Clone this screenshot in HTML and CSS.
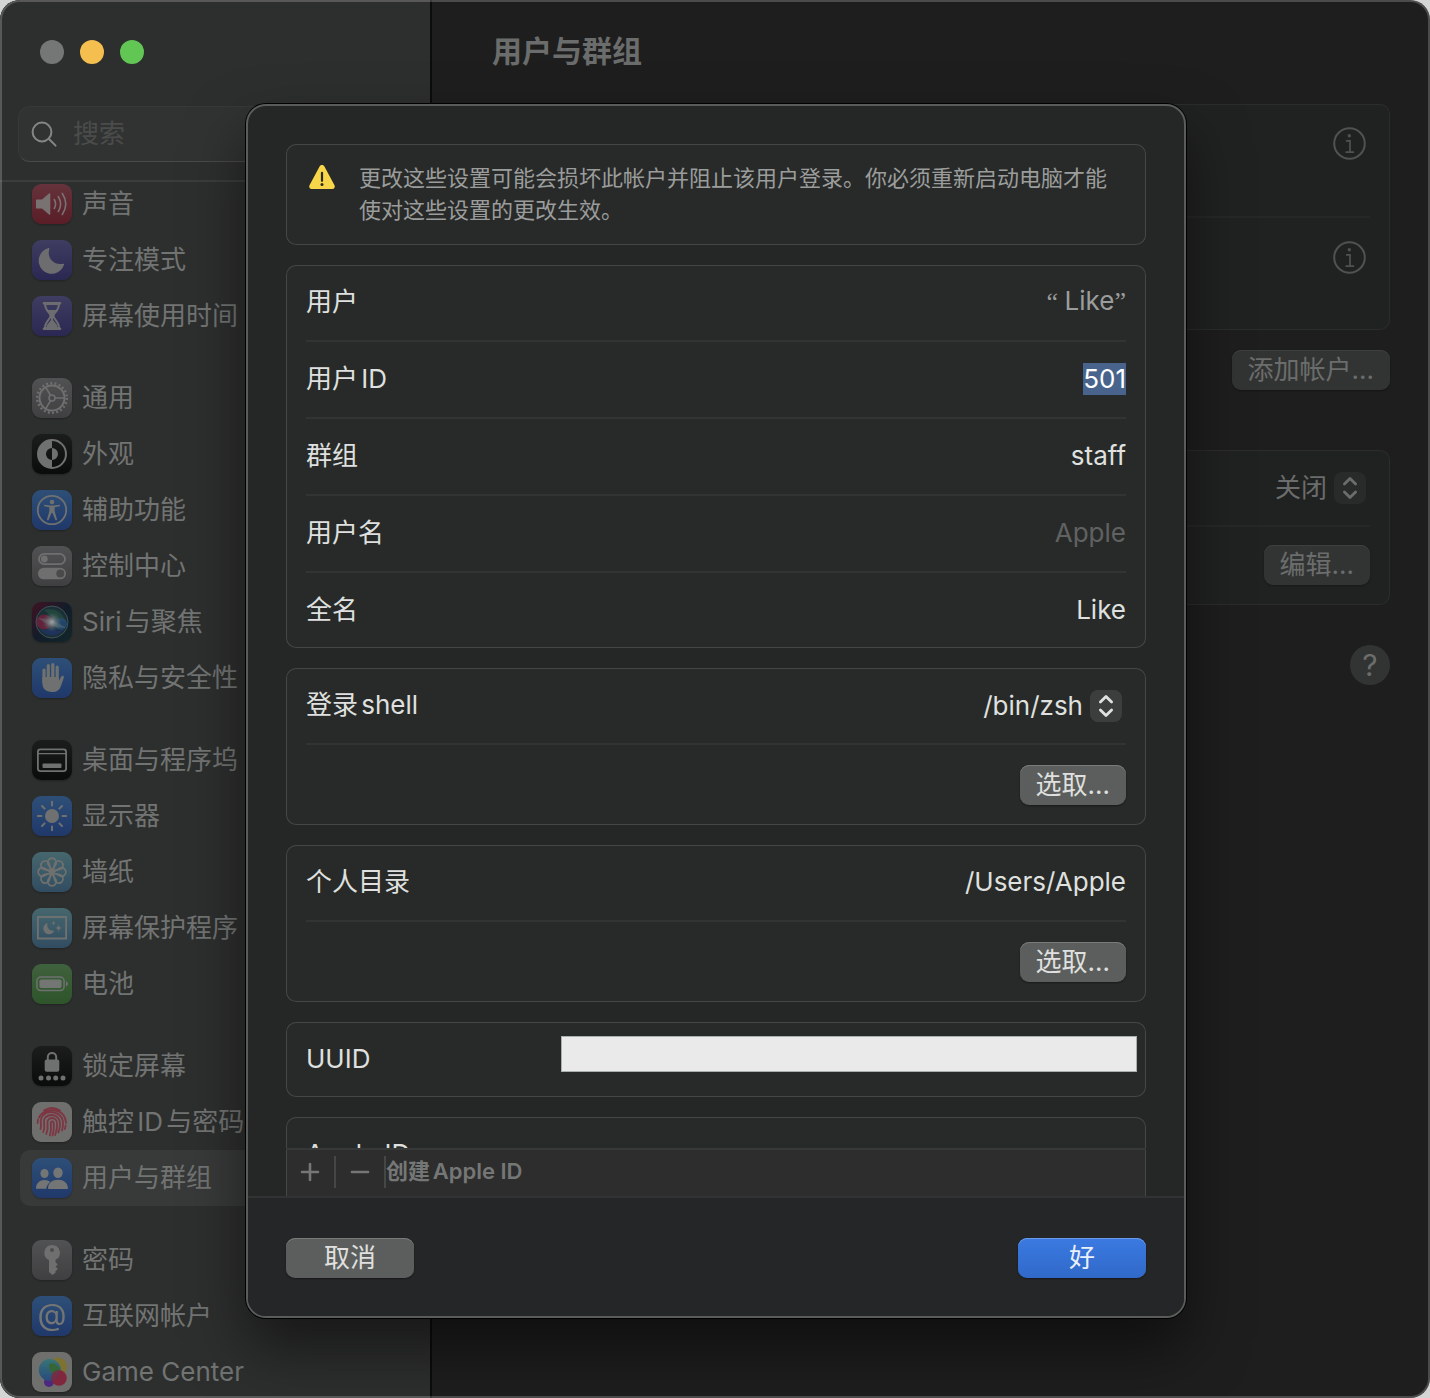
FILE: index.html
```html
<!DOCTYPE html>
<html lang="zh-CN">
<head>
<meta charset="utf-8">
<meta name="viewport" content="width=device-width, initial-scale=1">
<title>用户与群组</title>
<link rel="stylesheet" href="styles.css">
</head>
<body>
<svg class="defs" aria-hidden="true">
  <defs>
    <radialGradient id="siri-glow" cx="50%" cy="50%" r="50%">
      <stop offset="0" stop-color="#b4bcbe"/><stop offset=".35" stop-color="#8c989b" stop-opacity=".75"/><stop offset="1" stop-color="#54686c" stop-opacity="0"/>
    </radialGradient>
    <linearGradient id="siri-bg" x1="0" y1="0" x2="1" y2="1">
      <stop offset="0" stop-color="#4a1428"/><stop offset=".5" stop-color="#15202f"/><stop offset="1" stop-color="#142c30"/>
    </linearGradient>
    <linearGradient id="bubble-blue" x1="0" y1="0" x2="0" y2="1">
      <stop offset="0" stop-color="#3f8484"/><stop offset="1" stop-color="#2d5590"/>
    </linearGradient>
  </defs>
</svg>
<div class="window">
  <aside class="sidebar">
    <div class="sidebar-head">
      <div class="lights">
        <button class="light light-close" aria-label="关闭窗口"></button>
        <button class="light light-min" aria-label="最小化"></button>
        <button class="light light-zoom" aria-label="缩放"></button>
      </div>
      <label class="search">
        <svg width="28" height="28" viewBox="0 0 28 28" fill="none" stroke="#858786" stroke-width="2" stroke-linecap="round"><circle cx="12" cy="12" r="9.4"/><path d="M19 19l6.600 6.600"/></svg>
        <input type="search" placeholder="搜索" aria-label="搜索">
      </label>
    </div>
    <nav class="nav">
      <ul>
        <li><a href="#"><svg class="tile red" viewBox="0 0 40 40"><path fill="#8a8281" d="M5 15.500h5l7-6c.8-.6 1.300-.3 1.300.6v19.800c0 .9-.5 1.200-1.300.6l-7-6H5c-.7 0-1-.3-1-1v-7c0-.7.3-1 1-1z"/><path d="M22.300 15.500q2.600 4.500 0 9M26.300 12.500q4.600 7.500 0 15M30.300 9.500q7 10.500 0 21" fill="none" stroke="#8a8281" stroke-width="1.600" stroke-linecap="round"/></svg>声音</a></li>
        <li><a href="#"><svg class="tile indigo" viewBox="0 0 40 40"><path fill="#7c7c7e" d="M16.600 8.100c.5-.4 1 0 .8.600C14.500 17 21.300 26 31.200 23.700c.7-.2 1.200.3.900.9A13 13 0 1 1 16.600 8.100z"/></svg>专注模式</a></li>
        <li><a href="#"><svg class="tile indigo" viewBox="0 0 40 40"><path d="M12 7.300h16M12 32.700h16" stroke="#7c7c7e" stroke-width="2.600" stroke-linecap="round"/><path d="M13 8c0 7 5.500 8.500 5.500 12S13 25 13 32h14c0-7-5.500-8.500-5.500-12S27 15 27 8z" fill="none" stroke="#7c7c7e" stroke-width="2"/><path d="M15.500 14h9L21 18.500V24l4 5v3H15v-3l4-5v-5.500z" fill="#7c7c7e"/></svg>屏幕使用时间</a></li>
      </ul>
      <ul>
        <li><a href="#"><svg class="tile gray" viewBox="0 0 40 40"><g fill="none" stroke="#7e7e7e"><circle cx="20" cy="20" r="12.500" stroke-width="2"/><circle cx="20" cy="20" r="14.800" stroke-width="2.400" stroke-dasharray="1.900 2.326"/><circle cx="20" cy="20" r="3" stroke-width="1.500"/><path stroke-width="1.600" d="M23 20h9.500M18.500 17.400 13.700 9.200M18.500 22.600l-4.800 8.200"/></g></svg>通用</a></li>
        <li><a href="#"><svg class="tile black" viewBox="0 0 40 40"><circle cx="20" cy="20" r="14" fill="none" stroke="#7e807f" stroke-width="2"/><path d="M20 6a14 14 0 0 0 0 28v-8a6 6 0 0 1 0-12zM20 14a6 6 0 0 1 0 12z" fill="#7e807f"/></svg>外观</a></li>
        <li><a href="#"><svg class="tile blue" viewBox="0 0 40 40"><circle cx="20" cy="20" r="14.200" fill="none" stroke="#7e807f" stroke-width="1.800"/><circle cx="20" cy="12" r="2.300" fill="#7e807f"/><path fill="#7e807f" d="M12.800 14.700l5.200.8h4l5.200-.8c1-.1 1.300 1.300.3 1.500l-4.800 1.100v4.300l2.300 7.600c.2 1-1.300 1.400-1.700.5L20.500 23h-1l-2.800 6.700c-.4.9-1.900.5-1.700-.5l2.300-7.600v-4.300l-4.800-1.100c-1-.2-.7-1.600.3-1.500z"/></svg>辅助功能</a></li>
        <li><a href="#"><svg class="tile gray" viewBox="0 0 40 40"><rect x="7" y="7.800" width="26" height="10.400" rx="5.200" fill="none" stroke="#7e7e7e" stroke-width="1.800"/><circle cx="12.300" cy="13" r="3.400" fill="#7e7e7e"/><rect x="6" y="21.800" width="28" height="11.500" rx="5.700" fill="#7e7e7e"/><circle cx="28.300" cy="27.500" r="4" fill="#545455"/></svg>控制中心</a></li>
        <li><a href="#"><svg class="tile" viewBox="0 0 40 40"><rect width="40" height="40" fill="url(#siri-bg)"/><circle cx="20" cy="20" r="16" fill="#1f363d"/><circle cx="12" cy="20" r="7.500" fill="#7c2443" opacity=".85"/><path d="M12 8q16-4 22 12-10 0-22-12" fill="#285446" opacity=".8"/><circle cx="29" cy="22" r="6" fill="#28578a" opacity=".75"/><path d="M7 27q13 13 26 0-10 4-13-3-4 6-13 3" fill="#223a6c" opacity=".9"/><path d="M6 16q14 0 28 10-16 0-28-10" fill="#7f8e92" opacity=".4"/><circle cx="20" cy="20" r="10" fill="url(#siri-glow)"/><circle cx="20" cy="20" r="16" fill="none" stroke="#4b5c60" stroke-width="1"/></svg>Siri与聚焦</a></li>
        <li><a href="#"><svg class="tile blue" viewBox="0 0 40 40"><path d="M12 12v12M16.300 7.500V22M20.800 6.500V22M25.200 9V22" stroke="#7e807f" stroke-width="3.200" stroke-linecap="round"/><path d="M10.400 19h16.400v4l2.500-4.500c.8-1.400 3-.7 2.600.9l-3 8.600C27.500 32 25 34 20 34c-6.500 0-9.600-3.500-9.600-9z" fill="#7e807f"/></svg>隐私与安全性</a></li>
      </ul>
      <ul>
        <li><a href="#"><svg class="tile black" viewBox="0 0 40 40"><rect x="5.900" y="9.400" width="28.200" height="21.700" rx="2.500" fill="none" stroke="#7e807f" stroke-width="1.800"/><path d="M6 13.600h28" stroke="#7e807f" stroke-width="1.400"/><rect x="10.500" y="23.500" width="19" height="4.500" rx="1" fill="#7e807f"/></svg>桌面与程序坞</a></li>
        <li><a href="#"><svg class="tile blue" viewBox="0 0 40 40"><circle cx="20" cy="20" r="7" fill="#7e807f"/><path d="M20 5.800v3.700M20 30.500v3.700M5.800 20h3.700M30.500 20h3.700M10 10l2.600 2.600M27.400 27.400 30 30M10 30l2.600-2.600M27.400 12.600 30 10" stroke="#7e807f" stroke-width="2" stroke-linecap="round"/></svg>显示器</a></li>
        <li><a href="#"><svg class="tile teal" viewBox="0 0 40 40"><g fill="none" stroke="#7e807f" stroke-width="1.700"><g id="petals"><path id="petal" d="M22 21.500l-6-9.500a4.300 4.300 0 1 1 8 0l-6 9.500"/><use href="#petal" transform="rotate(90 20 20)"/><use href="#petal" transform="rotate(180 20 20)"/><use href="#petal" transform="rotate(270 20 20)"/></g><use href="#petals" transform="rotate(45 20 20)"/></g></svg>墙纸</a></li>
        <li><a href="#"><svg class="tile teal" viewBox="0 0 40 40"><rect x="5.900" y="9" width="28.200" height="21.500" fill="none" stroke="#7e807f" stroke-width="1.900"/><path fill="#7e807f" d="M15.500 15c-1.200 5 2.500 8.600 6.800 7.600A5.700 5.700 0 1 1 15.500 15zM26.500 16.500l.9 2.600 2.300.9-2.300.9-.9 2.600-.9-2.600-2.300-.9 2.300-.9zM21.500 12.800l.6 1.700 1.600.6-1.600.6-.6 1.700-.6-1.700-1.600-.6 1.600-.6z"/></svg>屏幕保护程序</a></li>
        <li><a href="#"><svg class="tile green" viewBox="0 0 40 40"><rect x="4.900" y="13" width="27.200" height="13.600" rx="4" fill="none" stroke="#7e807f" stroke-width="1.500"/><rect x="7.500" y="15.500" width="22" height="8.600" rx="1.800" fill="#848683"/><path d="M34 17.300c2.500.5 2.500 4.500 0 5z" fill="#7e807f"/></svg>电池</a></li>
      </ul>
      <ul>
        <li><a href="#"><svg class="tile black" viewBox="0 0 40 40"><rect x="12.700" y="13.500" width="14.600" height="12.300" rx="2" fill="#7e807f"/><path d="M15.800 14v-3c0-5.500 8.400-5.500 8.400 0v3" fill="none" stroke="#7e807f" stroke-width="2"/><g fill="#7e807f"><circle cx="9" cy="32" r="2.500"/><circle cx="16.500" cy="32" r="2.500"/><circle cx="23.700" cy="32" r="2.500"/><circle cx="31" cy="32" r="2.500"/></g></svg>锁定屏幕</a></li>
        <li><a href="#"><svg class="tile white" viewBox="0 0 40 40"><g fill="none" stroke="#8e3c4b" stroke-width="1.800" stroke-linecap="round"><path d="M12 8.500q8-5 16 0M7 15.500Q9.500 11 13.500 9.600 24 6 30.500 12q3.500 4 3.500 9M5.600 21q0-2 .6-3.500M8.500 27q1-3 .3-6c-.8-7 4.200-10.500 9.500-10.800C26 10 31 15 31 21q0 4-1 7.500M11.300 30q1.600-4 .8-8.500C11 15 16 13 19.700 13c5 0 8.300 4 8.300 8.500q0 5-1.600 9M14.300 32q2-5 1.200-10c-.7-4 1.800-6 4.400-6 3 0 5 2.500 5.200 5.500q.2 6-2 11.500M17.800 33.500q1.800-5.500 1-11.500c-.2-3.500 2.700-3.500 3 0q.4 6-1.300 11.500M32.800 27q.7-2 .8-3.500"/></g></svg>触控ID与密码</a></li>
        <li class="selected"><a href="#" aria-current="page"><svg class="tile blue" viewBox="0 0 40 40"><g fill="#848685"><ellipse cx="12.500" cy="15.500" rx="4.100" ry="4.600"/><ellipse cx="26" cy="14.800" rx="4.700" ry="5.200"/><path d="M4 30.500C4 25 8 22 12.500 22c2.300 0 4.300.7 5.800 2-2.300 1.600-3.800 4-4 6.700H4.600c-.4 0-.6 0-.6-.2zM16 30.300c0-5.300 4.500-8.600 10-8.600s10 3.300 10 8.600c0 .5-.3.700-.8.700H16.800c-.5 0-.8-.2-.8-.7z"/></g></svg>用户与群组</a></li>
      </ul>
      <ul>
        <li><a href="#"><svg class="tile gray" viewBox="0 0 40 40"><path fill="#7e7e7e" fill-rule="evenodd" d="M20 5a7.800 7.800 0 0 1 3.500 14.800v2.400l2.300 2.200-2.200 2.200 2.300 2.300-2.400 2.300v1.500L20.400 35 17 32V19.900A7.800 7.800 0 0 1 20 5zm0 3a2 2 0 1 0 0 4 2 2 0 0 0 0-4z"/></svg>密码</a></li>
        <li><a href="#"><svg class="tile blue" viewBox="0 0 40 40"><text x="20" y="29" text-anchor="middle" font-size="30" font-family="Inter, sans-serif" fill="#848685">@</text></svg>互联网帐户</a></li>
        <li><a href="#"><svg class="tile white" viewBox="0 0 40 40"><circle cx="17" cy="30" r="5" fill="#562d90"/><circle cx="26" cy="14.500" r="9" fill="#8f8138"/><circle cx="17.800" cy="18" r="11" fill="url(#bubble-blue)"/><path d="M17.600 11.500A9 9 0 0 1 27.700 23.400 9 9 0 0 1 17.600 11.500z" fill="#3b743f"/><circle cx="27" cy="26" r="7.800" fill="#922c47"/><path d="M19.300 24.600Q22 18 27.800 18.300 28 25 22.600 27.900 20 28.500 19.300 24.600" fill="#7a3b57" opacity=".7"/></svg>Game Center</a></li>
      </ul>
    </nav>
  </aside>

  <main class="content">
    <h1>用户与群组</h1>
    <div class="panel">
      <div class="account"><button class="info" aria-label="更多信息"><svg width="33" height="33" viewBox="0 0 33 33" fill="none" stroke="currentColor" stroke-width="2"><circle cx="16.500" cy="16.500" r="15.300"/><path d="M13 13.800h4V25M12.500 25.200h8.600" stroke-width="1.700"/><circle cx="16.300" cy="8.700" r="1.700" fill="currentColor" stroke="none"/></svg></button></div>
      <div class="account"><button class="info" aria-label="更多信息"><svg width="33" height="33" viewBox="0 0 33 33" fill="none" stroke="currentColor" stroke-width="2"><circle cx="16.500" cy="16.500" r="15.300"/><path d="M13 13.800h4V25M12.500 25.200h8.600" stroke-width="1.700"/><circle cx="16.300" cy="8.700" r="1.700" fill="currentColor" stroke="none"/></svg></button></div>
    </div>
    <div class="panel-actions"><button class="btn btn-dim">添加帐户…</button></div>
    <div class="panel">
      <div class="row">
        <div class="popup popup-dim">
          <select aria-label="自动登录"><option>关闭</option></select>
          <span class="stepper"><svg width="16" height="24" viewBox="0 0 16 24" fill="none" stroke="currentColor" stroke-width="2.800" stroke-linecap="round" stroke-linejoin="round"><path d="M2.400 8 8 2.400 13.600 8M2.400 16 8 21.600 13.600 16"/></svg></span>
        </div>
      </div>
      <div class="row row-action"><button class="btn btn-dim">编辑…</button></div>
    </div>
    <button class="help" aria-label="帮助">?</button>
  </main>

  <div class="overlay">
    <form class="sheet" role="dialog" aria-label="高级选项">
      <div class="sheet-body">
        <div class="card warning">
          <svg width="28" height="26" viewBox="0 0 28 26"><path d="M11.700 2.300c1-1.900 3.600-1.900 4.600 0l10.200 19c.9 1.800-.2 3.700-2.200 3.700H3.700c-2 0-3.100-1.900-2.200-3.700z" fill="#f8d64a"/><path d="M14 8.800v8" stroke="#2a2a22" stroke-width="2.200" stroke-linecap="round"/><circle cx="14" cy="20.500" r="1.500" fill="#2a2a22"/></svg>
          <p>更改这些设置可能会损坏此帐户并阻止该用户登录。你必须重新启动电脑才能使对这些设置的更改生效。</p>
        </div>
        <div class="card">
          <div class="row"><span class="label">用户</span><span class="label muted"><span class="quote">“ </span>Like<span class="quote">”</span></span></div>
          <div class="row"><label class="label" for="uid">用户ID</label><input class="highlighted" id="uid" value="501"></div>
          <div class="row"><label class="label" for="group">群组</label><input id="group" value="staff"></div>
          <div class="row"><label class="label" for="account">用户名</label><input id="account" placeholder="Apple"></div>
          <div class="row"><label class="label" for="fullname">全名</label><input id="fullname" value="Like"></div>
        </div>
        <div class="card">
          <div class="row">
            <label class="label" for="shell">登录shell</label>
            <div class="popup">
              <select id="shell"><option>/bin/zsh</option></select>
              <span class="stepper"><svg width="16" height="24" viewBox="0 0 16 24" fill="none" stroke="currentColor" stroke-width="2.800" stroke-linecap="round" stroke-linejoin="round"><path d="M2.400 8 8 2.400 13.600 8M2.400 16 8 21.600 13.600 16"/></svg></span>
            </div>
          </div>
          <div class="row row-action"><button type="button" class="btn">选取…</button></div>
        </div>
        <div class="card">
          <div class="row"><label class="label" for="home">个人目录</label><input id="home" value="/Users/Apple"></div>
          <div class="row row-action"><button type="button" class="btn">选取…</button></div>
        </div>
        <div class="card">
          <div class="row"><span class="label">UUID</span><span class="redacted"></span></div>
        </div>
        <div class="card">
          <div class="row"><span class="label">Apple ID</span></div>
          <div class="row"></div>
        </div>
        <div class="list-bar">
          <button type="button" class="bar-btn" aria-label="添加"><svg width="20" height="20" viewBox="0 0 20 20" stroke="currentColor" stroke-width="2.600" stroke-linecap="round"><path d="M10 2v16M2 10h16"/></svg></button>
          <button type="button" class="bar-btn" aria-label="移除"><svg width="20" height="20" viewBox="0 0 20 20" stroke="currentColor" stroke-width="2.600" stroke-linecap="round"><path d="M2 10h16"/></svg></button>
          <button type="button" class="bar-text">创建Apple ID</button>
        </div>
      </div>
      <div class="sheet-foot">
        <button type="button" class="btn btn-wide">取消</button>
        <button type="submit" class="btn btn-wide btn-primary">好</button>
      </div>
    </form>
  </div>
</div>
</body>
</html>
```
FILE: styles.css
```css
* { box-sizing: border-box; }

body {
  margin: 0;
  background: #d4d5d5;
  color: #dfe0df;
  font: 26px/32px Inter, "Noto Sans CJK SC", sans-serif;
  text-autospace: normal;
}

button, input, select {
  margin: 0;
  padding: 0;
  border: 0;
  background: none;
  color: inherit;
  font: inherit;
  outline: 0;
}

ul { margin: 0; padding: 0; list-style: none; }
a { color: inherit; text-decoration: none; }
svg { flex: none; display: block; }
.defs { position: absolute; width: 0; height: 0; }

/* Window */
.window {
  position: relative;
  display: flex;
  height: 100vh;
  overflow: hidden;
  border-radius: 20px;
  background: #1e1e1e;
}
.window::after {
  content: "";
  position: absolute;
  inset: 0;
  border: 2px solid rgba(255, 255, 255, .2);
  border-radius: 20px;
  pointer-events: none;
}

/* Sidebar */
.sidebar {
  display: flex;
  flex-direction: column;
  flex: none;
  width: 432px;
  border-right: 2px solid #0c0c0c;
  background: #2d2f2e;
  color: #727473;
}
.sidebar-head {
  flex: none;
  padding: 40px 18px 18px;
  border-bottom: 2px solid #3b3d3c;
}
.lights { display: flex; gap: 16px; padding-left: 22px; }
.light { width: 24px; height: 24px; border-radius: 50%; }
.light-close { background: #757776; }
.light-min { background: #f5bf4f; }
.light-zoom { background: #62c655; }
.search {
  display: flex;
  align-items: center;
  gap: 15px;
  height: 56px;
  margin-top: 42px;
  padding: 0 11px;
  border: 1px solid #373938;
  border-bottom-color: #484a49;
  border-radius: 12px;
  background: #313332;
}
.search input { flex: 1; min-width: 0; }
.search input::placeholder { color: #4a4c4b; }

.nav {
  flex: 1;
  display: flex;
  flex-direction: column;
  gap: 26px;
  min-height: 0;
  margin-top: -6px;
  padding: 0 20px;
  overflow: hidden;
}
.nav a {
  display: flex;
  align-items: center;
  gap: 10px;
  height: 56px;
  padding: 0 12px;
  border-radius: 10px;
}
.nav .selected a { background: #383a39; }
.tile {
  width: 40px;
  height: 40px;
  border-radius: 9px;
  box-shadow: 0 1px 2px rgba(0, 0, 0, .3);
  filter: brightness(.88);
}
.red { background: linear-gradient(#743a44, #66212c); }
.indigo { background: linear-gradient(#48456e, #302d5e); }
.gray { background: linear-gradient(#5c5d5e, #48484a); }
.black { background: linear-gradient(#1f2020, #0b0d0c); }
.blue { background: linear-gradient(#345a88, #244079); }
.teal { background: linear-gradient(#50757d, #38576e); }
.green { background: linear-gradient(#486f46, #346030); }
.white { background: #7e7e7d; }

/* Main pane */
.content {
  flex: 1;
  display: flex;
  flex-direction: column;
  min-width: 0;
  padding: 35px 40px;
  color: #6b6d6c;
}
h1 {
  margin: 0 0 37px;
  padding-left: 20px;
  font-size: 30px;
  line-height: 32px;
  font-weight: 600;
}
.panel {
  padding: 0 20px;
  border-radius: 10px;
  background: #202221;
  box-shadow: inset 0 0 0 1px #2b2d2c;
}
.account {
  display: flex;
  justify-content: flex-end;
  height: 112px;
  padding: 23px 4px;
}
.account + .account { border-top: 2px solid #262827; height: 114px; }
.info { width: 33px; height: 33px; color: #505251; }
.panel-actions { display: flex; justify-content: flex-end; margin: 20px 0 60px; }
.help {
  align-self: flex-end;
  width: 40px;
  height: 40px;
  margin-top: 40px;
  border-radius: 50%;
  background: #323433;
  font-size: 30px;
}

/* Rows and controls */
.row {
  display: flex;
  align-items: center;
  justify-content: space-between;
  height: 75px;
}
.row + .row { height: 77px; border-top: 2px solid #323433; }
.row + .row-action { height: 82px; justify-content: flex-end; }
.row input {
  height: 32px;
  margin-bottom: 2px;
  field-sizing: content;
  min-width: 0;
  text-align: right;
}
.row input::placeholder { color: #606261; }
.row .highlighted { background: #48648c; color: #fff; }
.label { margin-bottom: 2px; }
.muted { color: #9b9d9c; }
.quote { font-family: "Liberation Serif", serif; white-space: pre; }
.panel .row { justify-content: flex-end; }
.panel .row + .row { height: 80px; padding-bottom: 2px; border-color: #262827; }

.popup { position: relative; margin-right: 4px; }
.popup select {
  display: block;
  height: 32px;
  padding: 0 39px 2px 0;
  appearance: none;
  text-align: right;
}
.stepper {
  position: absolute;
  top: 0;
  right: 0;
  display: grid;
  place-items: center;
  width: 32px;
  height: 32px;
  border-radius: 8px;
  background: #3c3e3d;
  pointer-events: none;
}
.popup-dim .stepper { background: #292a2a; }

.btn {
  height: 40px;
  padding: 0 16px;
  border-radius: 9px;
  background: #5c5e5d;
  box-shadow: inset 0 1px 0 #797b7a, 0 1px 2px rgba(0, 0, 0, .4);
  line-height: 38px;
}
.btn-dim { background: #323433; box-shadow: inset 0 1px 0 #3e403f, 0 1px 2px rgba(0, 0, 0, .3); }
.btn-wide { width: 128px; }
.btn-primary {
  background: linear-gradient(#3b7ae2, #3069c8);
  box-shadow: inset 0 1px 0 #6a9aea, 0 1px 2px rgba(0, 0, 0, .4);
  color: #eaf0fb;
}

/* Sheet */
.overlay {
  position: absolute;
  inset: 0 0 0 2px;
  display: flex;
  justify-content: center;
  padding: 104px 40px 80px;
}
.sheet {
  display: flex;
  flex-direction: column;
  flex: 0 1 940px;
  min-width: 0;
  overflow: hidden;
  border: 2px solid #5a5c5b;
  border-radius: 20px;
  background: #252726;
  box-shadow: 0 0 0 1px #000, 0 30px 60px rgba(0, 0, 0, .5);
}
.sheet-body {
  position: relative;
  flex: 1;
  display: flex;
  flex-direction: column;
  gap: 20px;
  min-height: 0;
  padding: 38px 38px 0;
  overflow: hidden;
}
.card {
  flex: none;
  padding: 0 20px;
  border-radius: 10px;
  background: #282a29;
  box-shadow: inset 0 0 0 1px #454746;
}
.warning {
  display: flex;
  align-items: flex-start;
  gap: 23px;
  padding: 18px 20px 19px 22px;
  color: #9b9d9c;
  font-size: 22px;
}
.warning svg { margin-top: 2px; }
.warning p { margin: 0; }
.redacted {
  flex: 0 1 576px;
  align-self: flex-start;
  height: 36px;
  margin: 14px -11px 0 0;
  border: 1px solid #a9b0ae;
  background: #eaeaea;
}
.list-bar {
  position: absolute;
  right: 38px;
  bottom: 0;
  left: 38px;
  display: flex;
  align-items: center;
  height: 48px;
  padding-bottom: 2px;
  border-top: 2px solid #373938;
  background: #2d2d2d;
  box-shadow: inset 1px 0 0 #454746, inset -1px 0 0 #454746;
  color: #757776;
}
.bar-btn {
  display: grid;
  place-items: center;
  width: 50px;
  height: 32px;
  border-right: 2px solid #454746;
}
.bar-text { padding-bottom: 2px; font-size: 22px; font-weight: 600; }
.sheet-foot {
  flex: none;
  display: flex;
  justify-content: space-between;
  padding: 40px 38px 38px;
  border-top: 2px solid #323433;
  background: #252628;
}
```
